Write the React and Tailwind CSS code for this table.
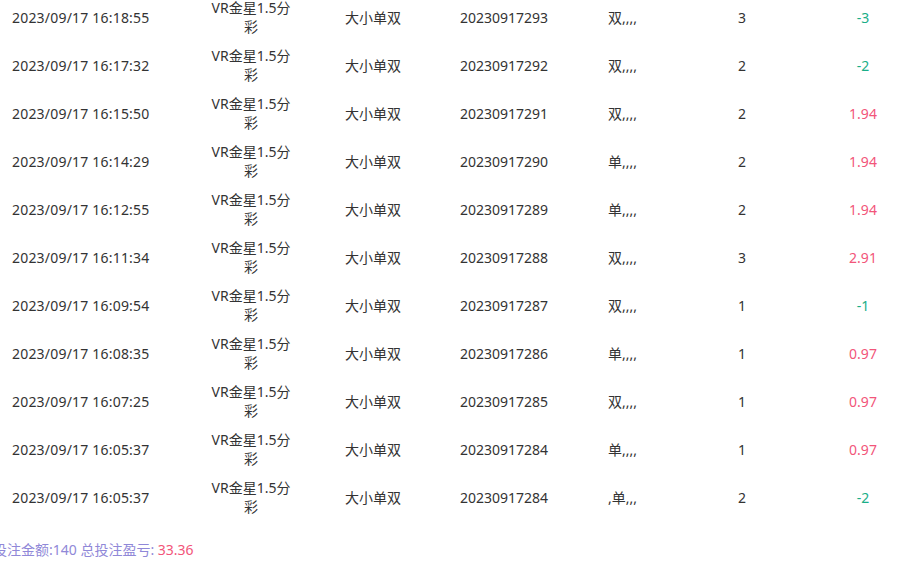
const rows = [
  { time: "2023/09/17 16:18:55", no: "20230917293", pick: "双,,,,", amount: 3, profit: "-3" },
  { time: "2023/09/17 16:17:32", no: "20230917292", pick: "双,,,,", amount: 2, profit: "-2" },
  { time: "2023/09/17 16:15:50", no: "20230917291", pick: "双,,,,", amount: 2, profit: "1.94" },
  { time: "2023/09/17 16:14:29", no: "20230917290", pick: "单,,,,", amount: 2, profit: "1.94" },
  { time: "2023/09/17 16:12:55", no: "20230917289", pick: "单,,,,", amount: 2, profit: "1.94" },
  { time: "2023/09/17 16:11:34", no: "20230917288", pick: "双,,,,", amount: 3, profit: "2.91" },
  { time: "2023/09/17 16:09:54", no: "20230917287", pick: "双,,,,", amount: 1, profit: "-1" },
  { time: "2023/09/17 16:08:35", no: "20230917286", pick: "单,,,,", amount: 1, profit: "0.97" },
  { time: "2023/09/17 16:07:25", no: "20230917285", pick: "双,,,,", amount: 1, profit: "0.97" },
  { time: "2023/09/17 16:05:37", no: "20230917284", pick: "单,,,,", amount: 1, profit: "0.97" },
  { time: "2023/09/17 16:05:37", no: "20230917284", pick: ",单,,,", amount: 2, profit: "-2" },
];

const Row = ({ row }) => {
  const lost = row.profit.startsWith("-");
  return (
    <div className="grid grid-cols-[200px_102px_158px_148px_84px_100px_142px] h-12 items-center">
      <div className="pl-3 tracking-[0.2px]">{row.time}</div>
      <div className="text-center">
        <div className="mx-auto w-[88px]">VR金星1.5分彩</div>
      </div>
      <div className="pl-[43px]">大小单双</div>
      <div>{row.no}</div>
      <div>{row.pick}</div>
      <div className="text-center">{row.amount}</div>
      <div className={`text-center ${lost ? "text-[#1aae88]" : "text-[#f2557a]"}`}>{row.profit}</div>
    </div>
  );
};

export default function App() {
  return (
    <div
      className="w-[901px] h-[573px] overflow-hidden bg-white text-[14px] leading-[19px] text-[#333]"
      style={{ fontFamily: '"Noto Sans", "Noto Sans CJK SC", sans-serif' }}
    >
      <div className="-mt-[7px]">
        {rows.map((row, i) => (
          <Row key={i} row={row} />
        ))}
      </div>
      <div className="mt-[19px] -ml-[21px] whitespace-nowrap text-[#9088d8]">
        总投注金额:140 总投注盈亏: <span className="text-[#f2557a]">33.36</span>
      </div>
    </div>
  );
}
